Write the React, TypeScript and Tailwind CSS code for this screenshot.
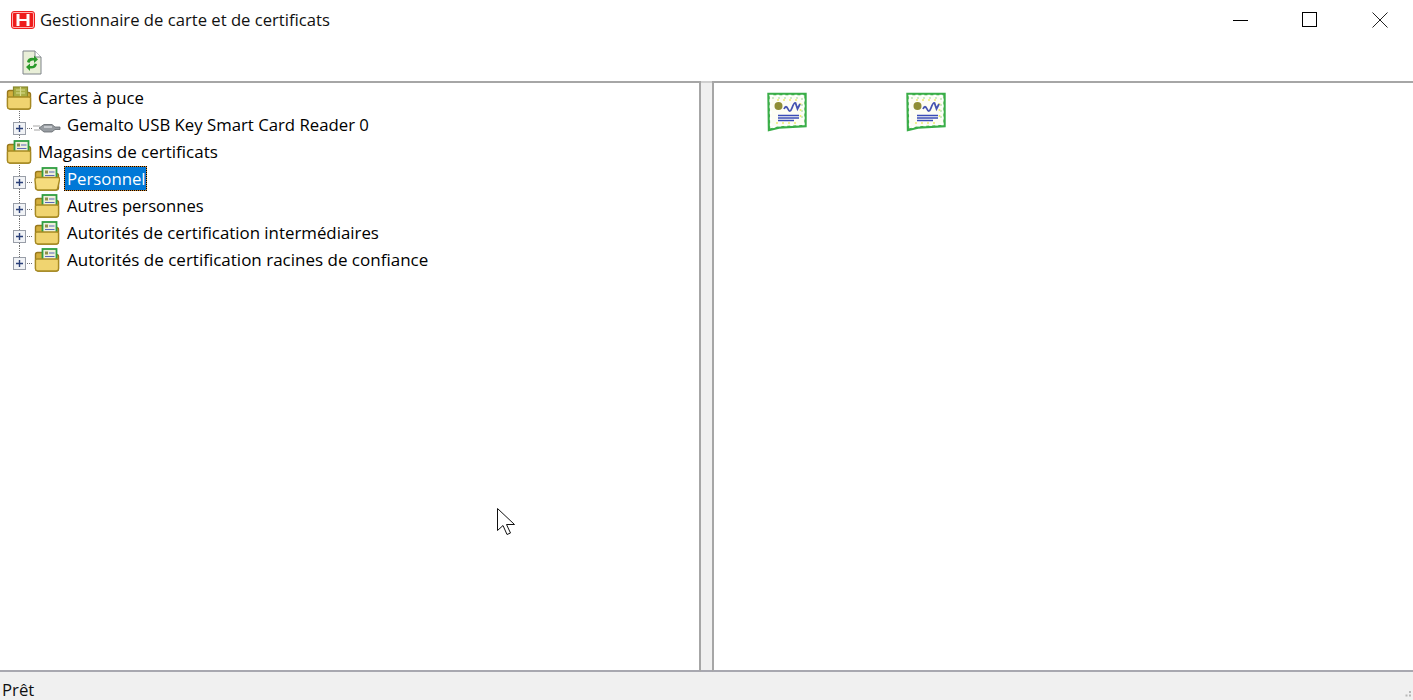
const FONT = "font-['Open_Sans','Noto_Sans',sans-serif]";

function Folder({ open = false, card = "cert" }: { open?: boolean; card?: "cert" | "chip" }) {
  return (
    <svg width="26" height="24" viewBox="0 0 26 24" className="shrink-0 blur-[0.3px]">
      <path d="M1.5 6.5 Q1.5 4.5 3.5 4.5 L9 4.5 L11 6.5 L22.5 6.5 Q24.5 6.5 24.5 8.5 L24.5 20.5 Q24.5 23 22 23 L4 23 Q1.5 23 1.5 20.5 Z" fill="#d3ae3c" stroke="#98781c" strokeWidth="1.4" />
      {card === "cert" ? (
        <g>
          <rect x="8.5" y="1" width="14" height="11" fill="#eef0dc" stroke="#2f9e41" strokeWidth="1.8" />
          <rect x="11" y="3.5" width="3" height="3" fill="#8f9048" />
          <path d="M15 5 H20.5 M11 8.5 H20.5" stroke="#5a68b8" strokeWidth="1.2" />
        </g>
      ) : (
        <g>
          <rect x="7.5" y="1" width="14" height="11" fill="#a9ad43" stroke="#87872c" strokeWidth="1.2" />
          <path d="M10 4 H19 M10 7 H19 M14.5 1 V10" stroke="#d9dc8e" strokeWidth="1.2" />
        </g>
      )}
      {open ? (
        <path d="M1 13 Q1 10.5 3 10.5 L24 10.5 Q26 10.5 25.6 12.5 L23.6 21.5 Q23.2 23 21.5 23 L4 23 Q2.3 23 2 21.2 Z" fill="#f5dc7d" stroke="#a78a22" strokeWidth="1.3" />
      ) : (
        <path d="M1.5 12 Q1.5 11 3 11 L23 11 Q24.5 11 24.5 12 L24.5 20.5 Q24.5 23 22 23 L4 23 Q1.5 23 1.5 20.5 Z" fill="#f0d470" stroke="#a78a22" strokeWidth="1.3" />
      )}
    </svg>
  );
}

function Connector({ last = false }: { last?: boolean }) {
  return (
    <svg width="33" height="27" viewBox="0 0 33 27" className="shrink-0">
      <path d={`M19.5 0 V${last ? 12 : 27}`} stroke="#707070" strokeDasharray="1 1" />
      <path d="M25 17.5 H33" stroke="#707070" strokeDasharray="1 1" />
      <rect x="13.5" y="11.5" width="12" height="12" fill="#f1f3f6" stroke="#999ea8" />
      <path d="M16 17.5 H23 M19.5 14 V21" stroke="#2a3f78" strokeWidth="1.4" />
    </svg>
  );
}

function Plug() {
  return (
    <svg width="29" height="16" viewBox="0 0 29 16" className="shrink-0 blur-[0.3px] translate-y-[3px]">
      <path d="M0 6 H7 M1 10 H7" stroke="#a4a4a4" />
      <path d="M6 8 L11 4.5 H19 L22 7 H27 V9.5 H22 L19 12 H11 Z" fill="#979ca1" stroke="#62676c" strokeWidth="0.8" />
      <path d="M11 7 H19" stroke="#e8eaec" strokeWidth="1.2" />
    </svg>
  );
}

function Cert() {
  return (
    <svg width="40" height="40" viewBox="0 0 40 40" className="shrink-0 blur-[0.4px]">
      <path d="M1.5 2 H38.5 V34 L12 35.5 L2 38 Z" fill="#fdfdf4" stroke="#3aae48" strokeWidth="2.4" />
      <path d="M3.4 3.8 H36.6 V32.2 L12 33.6 L3.9 35.6 Z" fill="none" stroke="#ffffff" strokeWidth="2" strokeDasharray="3 3" />
      <path d="M5 6 H35 V30" fill="none" stroke="#9fd69a" strokeWidth="1" strokeDasharray="2 4" />
      <path d="M10 8 H33 M33.5 11 V28 M9 31 H30" fill="none" stroke="#f0ec70" strokeWidth="1.6" strokeDasharray="2 4" />
      <circle cx="11.5" cy="14" r="4" fill="#8f8d35" />
      <path d="M17 17 Q19 12.5 21 17 T25 16 T28.5 11 L30.5 17 L33 12" fill="none" stroke="#4553b0" strokeWidth="1.8" />
      <path d="M11 23.5 H32 M11 26 H32 M11 28.5 H27" stroke="#3a4cb8" strokeWidth="1.5" />
    </svg>
  );
}

function Refresh() {
  return (
    <svg width="20" height="25" viewBox="0 0 20 25" className="blur-[0.25px]">
      <path d="M1 1 H13 L19 7 V24 H1 Z" fill="#e9efd8" stroke="#7f848a" />
      <path d="M13 1 V7 H19" fill="#ffffff" stroke="#7f848a" />
      <path d="M5 12 Q6 7 12 8 L12 5.5 L16 9.5 L12 13 L12 10.5 Q8 10 7.5 13 Z" fill="#2a9a2a" />
      <path d="M15 14 Q14 19 8 18.5 L8 21 L4 17 L8 13.5 L8 16 Q12 16.5 12.5 13.5 Z" fill="#2a9a2a" />
    </svg>
  );
}

function Row({ children, label, selected = false, size = "text-[16.75px]" }: { children: React.ReactNode; label: string; selected?: boolean; size?: string }) {
  return (
    <div className={`h-[27px] flex items-center whitespace-nowrap text-black ${size}`}>
      {children}
      {selected ? (
        <span className="ml-[4px] h-[25px] w-[83px] bg-[#d98a2b]">
          <span className="h-full w-full flex items-center pl-[2px] text-white bg-[#0078d7] bg-clip-padding border border-dotted border-black">
            {label}
          </span>
        </span>
      ) : (
        <span>{label}</span>
      )}
    </div>
  );
}

const stores = [
  { label: "Autres personnes", size: "text-[16.6px] [&>span:last-child]:translate-y-[1px]" },
  { label: "Autorités de certification intermédiaires", size: "text-[16.85px]" },
  { label: "Autorités de certification racines de confiance", size: "text-[17px]", last: true },
];

export default function App() {
  return (
    <div className={`${FONT} relative w-[1413px] h-[700px] overflow-hidden flex flex-col bg-white`}>
      <div className="h-[41px] shrink-0 flex items-center justify-between bg-white">
        <div className="flex items-center pl-[11px] gap-[5px]">
          <svg width="24" height="18" viewBox="0 0 24 18" className="shrink-0">
            <rect x="0.5" y="0.5" width="23" height="17" rx="2.5" fill="#ffb0b0" stroke="#f01c1c" />
            <rect x="2" y="2" width="20" height="14" rx="1" fill="#ee1c1c" />
            <path d="M5.5 3 H8.5 V8 H15.5 V3 H18.5 V15 H15.5 V10 H8.5 V15 H5.5 Z" fill="#ffffff" />
          </svg>
          <span className="text-[16.65px] text-[#111]">Gestionnaire de carte et de certificats</span>
        </div>
        <div className="flex items-center h-full pr-[2px]">
          <div className="w-[70px] flex justify-center">
            <svg width="16" height="16" viewBox="0 0 16 16"><path d="M0 7.5 H15" stroke="#000" /></svg>
          </div>
          <div className="w-[70px] flex justify-center -translate-x-[1px] -translate-y-[1px]">
            <svg width="16" height="16" viewBox="0 0 16 16"><rect x="0.5" y="0.5" width="14" height="14" fill="none" stroke="#000" /></svg>
          </div>
          <div className="w-[65px] flex justify-center pl-[3px]">
            <svg width="16" height="16" viewBox="0 0 16 16" className="-translate-y-[1px]"><path d="M0.5 0.5 L15.5 15.5 M15.5 0.5 L0.5 15.5" stroke="#222" /></svg>
          </div>
        </div>
      </div>

      <div className="h-[40px] shrink-0 flex items-center pl-[22px] pt-[3px] bg-white">
        <Refresh />
      </div>

      <div className="h-[591px] shrink-0 flex bg-[#f0f0f0]">
        <div className="w-[701px] shrink-0 bg-white border-t-2 border-t-[#a6a6a6] border-r-2 border-r-[#a6a6a6] border-b-2 border-b-[#a8a8b0] pt-[1px] pl-[5px]">
          <Row label="Cartes à puce">
            <div className="w-[36px] -ml-[3px] pl-[4px]"><Folder card="chip" /></div>
          </Row>
          <Row label="Gemalto USB Key Smart Card Reader 0">
            <div className="-ml-[5px]"><Connector /></div>
            <Plug />
            <span className="w-[5px]" />
          </Row>
          <Row label="Magasins de certificats" size="text-[17px]">
            <div className="w-[36px] -ml-[3px] pl-[4px]"><Folder /></div>
          </Row>
          <Row label="Personnel" selected>
            <div className="-ml-[5px]"><Connector /></div>
            <div className="ml-[1px]"><Folder open /></div>
          </Row>
          {stores.map((s) => (
            <Row key={s.label} label={s.label} size={s.size}>
              <div className="-ml-[5px]"><Connector last={s.last} /></div>
              <div className="ml-[1px]"><Folder /></div>
              <span className="w-[7px]" />
            </Row>
          ))}
        </div>
        <div className="w-[11px] shrink-0 border-t-2 border-t-[#cfcfcf] border-b-2 border-b-[#a8a8b0]" />
        <div className="flex-1 bg-white border-t-2 border-t-[#a6a6a6] border-l-2 border-l-[#a6a6a6] border-b-2 border-b-[#a8a8b0] pl-[53px] pt-[9px] flex items-start gap-[99px]">
          <Cert />
          <Cert />
        </div>
      </div>

      <div className="flex-1 relative flex items-center pl-[2px] pt-[8px] leading-none bg-[#f0f0f0] text-[16.75px] text-[#111]">
        Prêt
        <svg width="10" height="10" viewBox="0 0 10 10" className="absolute right-[1px] bottom-[1px]">
          <rect x="7" y="2" width="2" height="2" fill="#b8b8b8" />
          <rect x="3.5" y="5.5" width="2" height="2" fill="#b8b8b8" />
          <rect x="7" y="5.5" width="2" height="2" fill="#b8b8b8" />
        </svg>
      </div>

      <svg width="20" height="29" viewBox="0 0 20 29" className="absolute left-[497px] top-[508px]">
        <path d="M0.5 0.5 V22.5 L6 17.5 L10 26.5 L13.5 25 L9.5 16.5 H17.5 Z" fill="#ffffff" stroke="#111" />
      </svg>
    </div>
  );
}
